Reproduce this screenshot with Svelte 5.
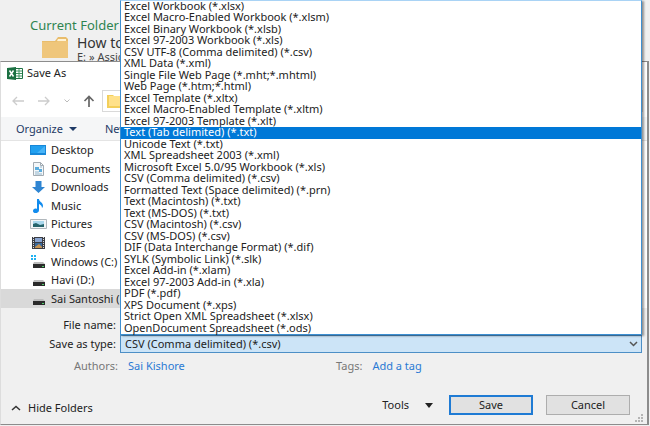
<script>
  const fileTypes = [
    'Excel Workbook (*.xlsx)',
    'Excel Macro-Enabled Workbook (*.xlsm)',
    'Excel Binary Workbook (*.xlsb)',
    'Excel 97-2003 Workbook (*.xls)',
    'CSV UTF-8 (Comma delimited) (*.csv)',
    'XML Data (*.xml)',
    'Single File Web Page (*.mht;*.mhtml)',
    'Web Page (*.htm;*.html)',
    'Excel Template (*.xltx)',
    'Excel Macro-Enabled Template (*.xltm)',
    'Excel 97-2003 Template (*.xlt)',
    'Text (Tab delimited) (*.txt)',
    'Unicode Text (*.txt)',
    'XML Spreadsheet 2003 (*.xml)',
    'Microsoft Excel 5.0/95 Workbook (*.xls)',
    'CSV (Comma delimited) (*.csv)',
    'Formatted Text (Space delimited) (*.prn)',
    'Text (Macintosh) (*.txt)',
    'Text (MS-DOS) (*.txt)',
    'CSV (Macintosh) (*.csv)',
    'CSV (MS-DOS) (*.csv)',
    'DIF (Data Interchange Format) (*.dif)',
    'SYLK (Symbolic Link) (*.slk)',
    'Excel Add-in (*.xlam)',
    'Excel 97-2003 Add-in (*.xla)',
    'PDF (*.pdf)',
    'XPS Document (*.xps)',
    'Strict Open XML Spreadsheet (*.xlsx)',
    'OpenDocument Spreadsheet (*.ods)'
  ]

  const places = [
    { icon: 'desktop', name: 'Desktop' },
    { icon: 'documents', name: 'Documents' },
    { icon: 'downloads', name: 'Downloads' },
    { icon: 'music', name: 'Music' },
    { icon: 'pictures', name: 'Pictures' },
    { icon: 'videos', name: 'Videos' },
    { icon: 'system', name: 'Windows (C:)' },
    { icon: 'drive', name: 'Havi (D:)' },
    { icon: 'drive', name: 'Sai Santoshi (E:)' }
  ]

  let fileName = ''
  let fileType = 'CSV (Comma delimited) (*.csv)'
  let highlighted = 'Text (Tab delimited) (*.txt)'
  let place = 'Sai Santoshi (E:)'
  let open = true

  function choose(type) {
    fileType = type
    highlighted = type
    open = false
  }
</script>

<style>
  :global(body) {
    margin: 0;
    background: #f0f0f0;
  }

  .page {
    font-family: 'Noto Sans', 'Open Sans', sans-serif;
    font-size: 11px;
    line-height: 14px;
    color: #222;
    overflow: hidden;
  }

  button,
  input,
  select {
    font: inherit;
    color: inherit;
    margin: 0;
    padding: 0;
    border: none;
    border-radius: 0;
    background: none;
  }

  svg {
    display: block;
    flex: none;
  }

  a {
    color: #2a7ad4;
    text-decoration: none;
  }

  .backstage {
    box-sizing: border-box;
    height: 61px;
    padding: 17px 0 0 30px;
    white-space: nowrap;
    overflow: hidden;
  }

  .backstage h2 {
    margin: 0;
    font-size: 13px;
    line-height: 16px;
    font-weight: 400;
    color: #2f8450;
  }

  .recent {
    display: flex;
    gap: 9px;
    padding: 3px 0 0 12px;
  }

  .recent p {
    margin: 0;
    font-size: 14px;
    line-height: 14px;
    color: #333;
  }

  .recent small {
    display: block;
    font-size: 11px;
    color: #444;
  }

  .dialog {
    position: relative;
    margin-right: 1px;
    border: 1px solid #8c8c8c;
    border-left-color: #ddd;
    border-right-width: 2px;
    background: #f0f0f0;
  }

  .title {
    display: flex;
    align-items: center;
    gap: 4px;
    height: 22px;
    padding-left: 6px;
    background: white;
  }

  .title h1 {
    margin: 0;
    font-size: 11px;
    font-weight: 400;
  }

  .nav {
    display: flex;
    align-items: center;
    gap: 12px;
    height: 33px;
    padding: 0 4px 0 10px;
    background: white;
  }

  .address {
    flex: 1;
    display: flex;
    align-items: center;
    height: 20px;
    margin-left: -5px;
    padding-left: 4px;
    border: 1px solid #d9d9d9;
  }

  .toolbar {
    display: flex;
    align-items: center;
    gap: 28px;
    height: 23px;
    padding-left: 15px;
    background: #f5f6f7;
    border-bottom: 1px solid #e4e4e4;
    color: #1e3a66;
  }

  .toolbar button {
    display: flex;
    align-items: center;
    gap: 6px;
  }

  .body {
    display: flex;
    height: 167px;
    background: white;
  }

  .places {
    flex: 0 0 160px;
    display: grid;
    grid-auto-rows: 1fr;
    margin: 0;
    padding: 0;
    list-style: none;
  }

  .places button {
    display: flex;
    align-items: center;
    gap: 4px;
    width: 100%;
    height: 100%;
    padding-left: 29px;
    white-space: nowrap;
  }

  .places .current {
    background: #d9d9d9;
  }

  .fields {
    display: grid;
    grid-template-columns: 115px 1fr;
    align-items: center;
    gap: 1px 4px;
    padding: 8px 5px 0 0;
  }

  .fields label {
    text-align: right;
  }

  .fields input {
    height: 18px;
    box-sizing: border-box;
    background: white;
    border: 1px solid #7a7a7a;
  }

  .type {
    position: relative;
    display: grid;
    align-items: center;
  }

  .type select {
    appearance: none;
    grid-area: 1 / 1;
    width: 100%;
    height: 18px;
    padding-left: 4px;
    border: 1px solid #4d8fc6;
    background: #cce4f7;
    outline: none;
  }

  .type svg {
    grid-area: 1 / 1;
    justify-self: end;
    margin-right: 4px;
    pointer-events: none;
  }

  .menu {
    position: absolute;
    left: 0;
    right: 0;
    bottom: 100%;
    box-sizing: border-box;
    height: 335px;
    display: grid;
    grid-auto-rows: 1fr;
    margin: 0;
    padding: 0;
    list-style: none;
    background: white;
    border: 1px solid #3d8fd1;
    border-top-color: #a9d3f5;
    box-shadow: 2px 1px 2px #0006;
    line-height: 10px;
    cursor: default;
  }

  .menu li {
    padding-left: 3px;
    white-space: nowrap;
  }

  .menu .active {
    background: #0078d7;
    color: white;
  }

  .meta {
    display: flex;
    gap: 10px;
    padding: 6px 0 0 73px;
    color: #777;
  }

  .meta div {
    flex: 0 0 252px;
    display: flex;
    gap: 10px;
  }

  .footer {
    display: flex;
    align-items: center;
    padding: 22px 17px 9px 10px;
  }

  .hide {
    display: flex;
    align-items: center;
    gap: 7px;
    margin-right: auto;
    align-self: flex-end;
  }

  .tools {
    display: flex;
    align-items: center;
    gap: 16px;
    margin-right: 16px;
  }

  .push {
    box-sizing: border-box;
    width: 84px;
    height: 20px;
    margin-left: 13px;
    background: #e1e1e1;
    border: 1px solid #adadad;
  }

  .push.default {
    margin-left: 0;
    border: 2px solid #1f7bd4;
  }

  .grip {
    position: absolute;
    right: 3px;
    bottom: 1px;
  }
</style>

<div class="page">
  <section class="backstage">
    <h2>Current Folder</h2>
    <div class="recent">
      <svg width="26" height="22" viewBox="0 0 26 22">
        <path d="M0 5h13l3-4h8l2 2v19H0z" fill="#e9bd6c" />
        <path d="M16 3h8v2h-9z" fill="#fff3d6" />
        <path d="M0 6h14l2-1h10v17H0z" fill="#efc67b" />
      </svg>
      <p>How to <small>E: » Assig</small></p>
    </div>
  </section>

  <div class="dialog" role="dialog" aria-label="Save As">
    <header class="title">
      <svg width="16" height="13" viewBox="0 0 16 13">
        <path d="M8 1.5h7.5v10H8z" fill="#fff" stroke="#1f7244" />
        <path d="M12 2v9M9 4h6M9 6.5h6M9 9h6" stroke="#3f9463" />
        <path d="M0 1l9-1v13l-9-1z" fill="#1b7042" />
        <path d="M2.5 3.5l4 6M6.5 3.5l-4 6" stroke="#fff" stroke-width="1.5" />
      </svg>
      <h1>Save As</h1>
    </header>

    <nav class="nav">
      <button aria-label="Back">
        <svg width="14" height="10" viewBox="0 0 14 10" fill="none" stroke="#ccc" stroke-width="1.3">
          <path d="M13 5H2M6 1L2 5l4 4" />
        </svg>
      </button>
      <button aria-label="Forward">
        <svg width="14" height="10" viewBox="0 0 14 10" fill="none" stroke="#ccc" stroke-width="1.3">
          <path d="M1 5h11M8 1l4 4-4 4" />
        </svg>
      </button>
      <button aria-label="Recent locations">
        <svg width="8" height="6" viewBox="0 0 8 6" fill="none" stroke="#bbb">
          <path d="M1.5 1.5L4 4l2.5-2.5" />
        </svg>
      </button>
      <button aria-label="Up">
        <svg width="12" height="12" viewBox="0 0 12 12" fill="none" stroke="#666" stroke-width="1.7">
          <path d="M6 12V2M1.5 6L6 1.5 10.5 6" />
        </svg>
      </button>
      <div class="address">
        <svg width="16" height="14" viewBox="0 0 16 14">
          <path d="M0 1h6l1 1h9v12H0z" fill="#f3cf5a" />
          <path d="M2 2h12v10H2z" fill="#ffe18a" />
        </svg>
      </div>
    </nav>

    <div class="toolbar">
      <button>
        Organize
        <svg width="8" height="4" viewBox="0 0 8 4"><path d="M0 0h8L4 4z" fill="#1e3a66" /></svg>
      </button>
      <button>New folder</button>
    </div>

    <div class="body">
      <ul class="places">
        {#each places as { icon, name }}
          <li>
            <button class:current={name === place} on:click={() => (place = name)}>
              <svg width="17" height="14" viewBox="0 0 17 14">
                {#if icon === 'desktop'}
                  <path d="M0 2h16v10H0z" fill="#1787d8" />
                  <path d="M1 3h14v7H1z" fill="#21a0f0" />
                  <path d="M7 10l8-7v7z" fill="#48b4f7" />
                {:else if icon === 'documents'}
                  <path d="M3.5.5h7l3 3v10h-10z" fill="#f4f7f9" stroke="#a3abb2" />
                  <path d="M10.5.5v3h3" fill="none" stroke="#a3abb2" />
                  <path d="M5 5h4v3H5zM9 7h3v3H9z" fill="#5badde" />
                  <path d="M5 10h4M5 12h7M10 5h2" stroke="#91b5cc" />
                {:else if icon === 'downloads'}
                  <path d="M5.5 1h6v6H15l-6.5 6L2 7h3.5z" fill="#2f85d2" />
                {:else if icon === 'music'}
                  <path d="M7 0h2c0 3 4 3 4 7 0 1-1 2-1 2 0-3-3-4-3-4v6c0 4-6 4-6 1 0-2 2-3 4-2z" fill="#128cee" />
                {:else if icon === 'pictures'}
                  <path d="M.5 2.5h16v9H.5z" fill="#f2f5f7" stroke="#b0b7bc" />
                  <path d="M3 4h11v6H3z" fill="#a9d7ec" />
                  <path d="M3 10V7l3-1 4 2 4-1v3z" fill="#24636b" />
                {:else if icon === 'videos'}
                  <path d="M2 1h13v12H2z" fill="#3b3d44" />
                  <path d="M5 2h7v4H5z" fill="#88a4d0" />
                  <path d="M5 7h7v5H5z" fill="#3a6a9d" />
                  <path d="M5 11l4-3 3 3v1H5z" fill="#c99450" />
                  <path d="M3.5 1v12M13.5 1v12" stroke="#ddd" stroke-dasharray="1 1" />
                {:else}
                  {#if icon === 'system'}
                    <path d="M1 0h2v2H1zM4 0h2v2H4zM1 3h2v2H1zM4 3h2v2H4z" fill="#1fb2f2" />
                  {/if}
                  <path d="M4 7h9l2 2H3z" fill="#bdbdbd" />
                  <path d="M3 9h12v4H3z" fill="#2b2b2b" />
                  <path d="M12 11h2v1h-2z" fill="#4fd06a" />
                {/if}
              </svg>
              {name}
            </button>
          </li>
        {/each}
      </ul>
    </div>

    <div class="fields">
      <label for="file-name">File name:</label>
      <input id="file-name" type="text" bind:value={fileName} />
      <label for="file-type">Save as type:</label>
      <div class="type">
        <select id="file-type" bind:value={fileType}>
          {#each fileTypes as type}
            <option>{type}</option>
          {/each}
        </select>
        <svg width="9" height="6" viewBox="0 0 9 6" fill="none" stroke="#555" stroke-width="1.5">
          <path d="M1 1l3.5 3.5L8 1" />
        </svg>
        {#if open}
          <ul class="menu" role="listbox" aria-label="Save as type">
            {#each fileTypes as type}
              <li
                role="option"
                tabindex="-1"
                aria-selected={type === highlighted}
                class:active={type === highlighted}
                on:mouseenter={() => (highlighted = type)}
                on:keydown={e => e.key === 'Enter' && choose(type)}
                on:click={() => choose(type)}>
                {type}
              </li>
            {/each}
          </ul>
        {/if}
      </div>
    </div>

    <div class="meta">
      <div>Authors: <a href="#authors">Sai Kishore</a></div>
      <div>Tags: <a href="#tags">Add a tag</a></div>
    </div>

    <footer class="footer">
      <button class="hide">
        <svg width="10" height="6" viewBox="0 0 10 6" fill="none" stroke="#333" stroke-width="1.5">
          <path d="M1 5l4-3.5L9 5" />
        </svg>
        Hide Folders
      </button>
      <button class="tools">
        Tools
        <svg width="8" height="5" viewBox="0 0 8 5"><path d="M0 0h8L4 5z" fill="#222" /></svg>
      </button>
      <button class="push default">Save</button>
      <button class="push">Cancel</button>
    </footer>

    <svg class="grip" width="9" height="9" viewBox="0 0 9 9" fill="#b5b5b5">
      <path d="M6 0h2v2H6zM3 3h2v2H3zM6 3h2v2H6zM0 6h2v2H0zM3 6h2v2H3zM6 6h2v2H6z" />
    </svg>
  </div>
</div>
